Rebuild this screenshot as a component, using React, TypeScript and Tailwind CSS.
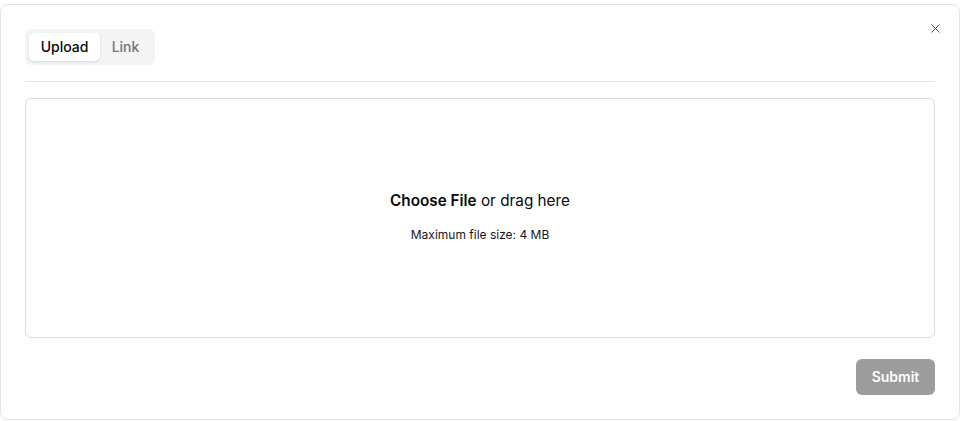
import { X } from "lucide-react";

export default function App() {
  return (
    <div className="w-[960px] h-[421px] bg-white pt-[4px] font-['Inter',sans-serif]">
      <div className="relative h-[416px] rounded-lg border border-[#e4e4e7] bg-white p-6 flex flex-col">
        {/* Close button */}
        <button className="absolute right-[16px] top-[16px] text-[#3f3f46]">
          <X className="h-[15px] w-[15px]" strokeWidth={1.5} />
        </button>

        {/* Tabs */}
        <div className="flex">
          <div className="flex items-center h-9 rounded-md bg-[#f4f4f5] p-1">
            <div className="h-7 w-[71px] flex items-center justify-center rounded-[5px] bg-white shadow-sm text-sm font-medium text-[#09090b]">
              Upload
            </div>
            <div className="h-7 w-[51px] flex items-center justify-center text-sm font-medium text-[#71717a]">
              Link
            </div>
          </div>
        </div>

        <div className="mt-4 h-px bg-[#e4e4e7]" />

        {/* Dropzone */}
        <div className="mt-4 h-[240px] rounded-md border border-[#dcdce0] flex flex-col items-center justify-center pb-[4px]">
          <p className="text-[15.3px] leading-6 text-[#09090b]">
            <span className="font-semibold">Choose File</span> or drag here
          </p>
          <p className="mt-[14px] text-xs leading-4 text-[#18181b]">
            Maximum file size: 4 MB
          </p>
        </div>

        <div className="mt-auto flex justify-end">
          <button className="h-9 w-[79px] rounded-md bg-[#9c9c9c] text-sm font-semibold text-white">
            Submit
          </button>
        </div>
      </div>
    </div>
  );
}
